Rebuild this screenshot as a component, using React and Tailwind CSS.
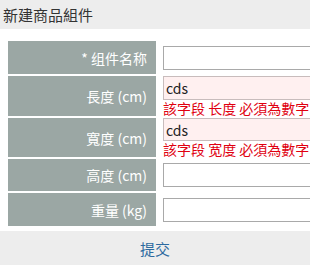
const rows = [
  { label: "* 组件名称", value: "", h: "h-[33px]" },
  { label: "長度 (cm)", value: "cds", error: "該字段 长度 必須為數字", h: "h-[40px]" },
  { label: "寬度 (cm)", value: "cds", error: "該字段 宽度 必須為數字", h: "h-[39px]" },
  { label: "高度 (cm)", value: "", h: "h-[32px]" },
  { label: "重量 (kg)", value: "", h: "h-[33px]", last: true },
];

function Field({ row }) {
  return (
    <div className={`flex ${row.h} ${row.last ? "" : "box-content border-b-2 border-white"}`}>
      <div className="flex w-[148px] shrink-0 items-center justify-end bg-[#9ba7a4] pr-[9px] text-[14px] text-white">
        {row.label}
      </div>
      <div className="flex flex-col justify-center pl-[7px]">
        <input
          readOnly
          value={row.value}
          className={`h-[24px] w-[220px] border px-[2px] text-[14px] text-[#222] outline-none ${
            row.error ? "border-[#c8bcbc] bg-[#fff0f0]" : "border-[#a9a9a9] bg-white"
          }`}
        />
        {row.error && (
          <p className="whitespace-nowrap text-[14px] leading-[16px] text-[#e00010]">{row.error}</p>
        )}
      </div>
    </div>
  );
}

export default function App() {
  return (
    <div className="h-[265px] w-[310px] overflow-hidden bg-white font-['Noto_Sans_CJK_SC',sans-serif] leading-none">
      <div className="flex h-[29px] items-center bg-[#ededed] pl-[3px] text-[15px] text-[#333]">新建商品組件</div>
      <div className="ml-[8px] mt-[12px] flex flex-col">
        {rows.map((row) => <Field key={row.label} row={row} />)}
      </div>
      <div className="mt-[5px] flex h-[34px] items-center justify-center bg-[#ededed] text-[15px] text-[#2d6a9f]">
        提交
      </div>
    </div>
  );
}
